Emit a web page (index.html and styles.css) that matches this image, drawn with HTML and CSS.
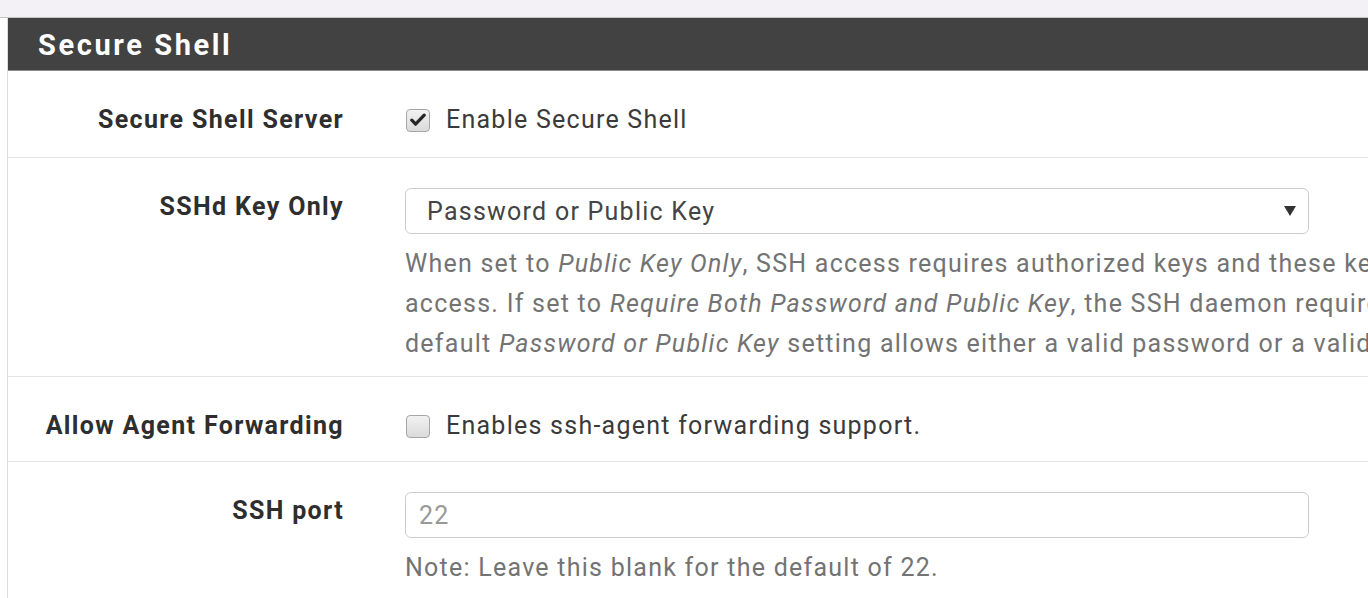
FILE: index.html
```html
<!DOCTYPE html>
<html>
<head>
<meta charset="utf-8">
<link rel="stylesheet" href="styles.css">
</head>
<body>
<div class="topband"></div>
<div class="panel">
  <div class="panel-heading">Secure Shell</div>
  <div class="row">
    <div class="label">Secure Shell Server</div>
    <div class="content">
      <label class="check">
        <span class="box"><svg width="16" height="14" viewBox="0 0 16 14"><path d="M1.8 7.2 L5.6 11.2 L14.2 2.2" fill="none" stroke="#262626" stroke-width="3.2" stroke-linecap="round" stroke-linejoin="round"/></svg></span>
        <span class="check-text">Enable Secure Shell</span>
      </label>
    </div>
  </div>
  <div class="row">
    <div class="label">SSHd Key Only</div>
    <div class="content">
      <div class="select">
        <span>Password or Public Key</span>
        <svg class="arrow" width="12" height="10" viewBox="0 0 12 10"><path d="M0 0 H12 L6 10 Z" fill="#333"/></svg>
      </div>
      <div class="help help-first">When set to <i>Public Key Only</i>, SSH access requires authorized keys and these keys must be configured for each user that has been granted secure shell<br>access. If set to <i>Require Both Password and Public Key</i>, the SSH daemon requires both authorized keys and valid passwords to gain access. The<br>default <i>Password or Public Key</i> setting allows either a valid password or a valid authorized key to login.</div>
    </div>
  </div>
  <div class="row row-tight">
    <div class="label">Allow Agent Forwarding</div>
    <div class="content">
      <label class="check">
        <span class="box"></span>
        <span class="check-text">Enables ssh-agent forwarding support.</span>
      </label>
    </div>
  </div>
  <div class="row">
    <div class="label">SSH port</div>
    <div class="content">
      <input class="text-input" type="text" placeholder="22">
      <div class="help">Note: Leave this blank for the default of 22.</div>
    </div>
  </div>
</div>
</body>
</html>
```

FILE: styles.css
```css
html, body {
  margin: 0;
  padding: 0;
  overflow: hidden;
  background: #ffffff;
  font-family: Roboto, "Liberation Sans", sans-serif;
  color: #333;
}
.topband {
  height: 17px;
  background: #f3f1f5;
  border-bottom: 1px solid #c4c4c4;
}
.panel {
  margin-left: 7px;
  border-left: 1px solid #dcdcdc;
}
.panel-heading {
  height: 53px;
  box-sizing: border-box;
  background: #424242;
  color: #fff;
  font-weight: 700;
  font-size: 29px;
  line-height: 54px;
  padding-left: 30px;
  letter-spacing: 2.6px;
  border-bottom: 1px solid #8a8a8a;
}
.row {
  display: flex;
  align-items: flex-start;
  padding: 30px 0 18px;
  border-bottom: 1px solid #e4e4e4;
}
.row-tight {
  padding-bottom: 16px;
}
.label {
  width: 336px;
  flex: none;
  text-align: right;
  font-weight: 700;
  font-size: 25px;
  letter-spacing: 1.35px;
  line-height: 38px;
  color: #2e2e2e;
}
.content {
  margin-left: 61px;
  flex: 1;
  min-width: 0;
  font-size: 25px;
  letter-spacing: 1.25px;
}
.check {
  display: flex;
  align-items: center;
  height: 38px;
}
.box {
  width: 22px;
  height: 21px;
  margin-left: 1px;
  border: 1px solid #a6a6a6;
  border-radius: 4px;
  background: linear-gradient(#f2f2f2, #dadada);
  display: flex;
  align-items: center;
  justify-content: center;
  flex: none;
}
.check-text {
  margin-left: 16px;
  color: #3a3a3a;
  line-height: 38px;
}
.select {
  width: 904px;
  height: 46px;
  box-sizing: border-box;
  border: 1px solid #cccccc;
  border-radius: 6px;
  display: flex;
  align-items: center;
  padding: 0 12px 0 21px;
  color: #444;
  line-height: 1;
}
.arrow {
  margin-left: auto;
}
.help {
  margin: 10px 0 0;
  color: #737373;
  line-height: 40px;
  white-space: nowrap;
}
.help-first {
  margin-bottom: -6px;
}
.text-input {
  display: block;
  width: 904px;
  height: 46px;
  box-sizing: border-box;
  border: 1px solid #cccccc;
  border-radius: 6px;
  padding: 0 13px;
  font-family: Roboto, "Liberation Sans", sans-serif;
  font-size: 25px;
  letter-spacing: 1.25px;
  color: #444;
  margin: 0;
  outline: none;
}
.text-input::placeholder {
  color: #999;
}
```
